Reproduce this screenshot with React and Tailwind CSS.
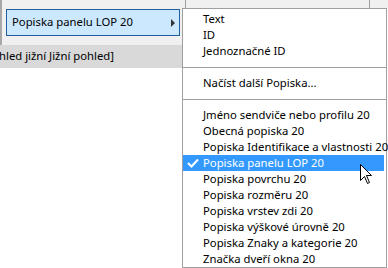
import React from 'react';

const font = { fontFamily: '"Noto Sans", "Liberation Sans", sans-serif' };

const topItems = ['Text', 'ID', 'Jednoznačné ID'];
const labels = [
  'Jméno sendviče nebo profilu 20',
  'Obecná popiska 20',
  'Popiska Identifikace a vlastnosti 20',
  'Popiska panelu LOP 20',
  'Popiska povrchu 20',
  'Popiska rozměru 20',
  'Popiska vrstev zdi 20',
  'Popiska výškové úrovně 20',
  'Popiska Znaky a kategorie 20',
  'Značka dveří okna 20',
];

const Item = ({ children, active }) => (
  <div
    className={`relative h-[16px] flex items-center pl-[20px] mr-[2px] leading-none whitespace-nowrap ${
      active ? 'bg-[#3399ff] text-white' : 'text-black'
    }`}
  >
    {active && (
      <svg className="absolute left-[4px] top-[3px]" width="12" height="10" viewBox="0 0 12 10">
        <path d="M1 5 L4.5 8.5 L11 1.5" fill="none" stroke="white" strokeWidth="2" />
      </svg>
    )}
    {children}
  </div>
);

const Separator = () => (
  <div className="h-[16px] flex items-center">
    <div className="h-px w-full bg-[#a0a0a0]" />
  </div>
);

const App = () => {
  return (
    <div className="relative w-[388px] h-[268px] overflow-hidden bg-white text-[11.3px]" style={font}>
      <div className="flex">
        {/* left column: parent menu + list row behind */}
        <div className="w-[186px] flex flex-col">
          <div className="h-[45px] bg-[#f0f0f0] border-l-[2px] border-[#a8a8a8] border-r border-r-[#a0a0a0] pt-[9px] pl-[4px] pr-[5px]">
            <div className="h-[27px] bg-[#cce8ff] border border-[#1f5f9f] flex items-center justify-between pl-[5px] pr-[4px] text-black">
              <span>Popiska panelu LOP 20</span>
              <svg width="4" height="8" viewBox="0 0 4 8">
                <path d="M0 0 L4 4 L0 8 Z" fill="#333" />
              </svg>
            </div>
          </div>
          <div className="h-[23px] bg-[#d9d9d9] flex items-center -ml-[1px] text-black whitespace-nowrap">
            hled jižní Jižní pohled]
          </div>
        </div>
        {/* right column: header strip */}
        <div className="flex-1 h-[8px] bg-[#f0f0f0] flex">
          <div className="w-[184px] border-r border-[#a0a0a0]" />
        </div>
      </div>

      {/* submenu */}
      <div className="absolute left-[182px] top-[8px] w-[205px] bg-white border border-[#a0a0a0] pt-[2px]">
        {topItems.map((t) => (
          <Item key={t}>{t}</Item>
        ))}
        <Separator />
        <Item>Načíst další Popiska...</Item>
        <Separator />
        {labels.map((t) => (
          <Item key={t} active={t === 'Popiska panelu LOP 20'}>
            {t}
          </Item>
        ))}
      </div>

      {/* mouse cursor */}
      <svg className="absolute left-[360px] top-[164px]" width="13" height="21" viewBox="0 0 13 21">
        <path
          d="M0.5 0.5 L0.5 16.5 L4.5 12.5 L7.5 19.5 L9.5 18.5 L6.5 11.5 L11.5 11.5 Z"
          fill="white"
          stroke="black"
          strokeWidth="1"
        />
      </svg>
    </div>
  );
};

export default App;
